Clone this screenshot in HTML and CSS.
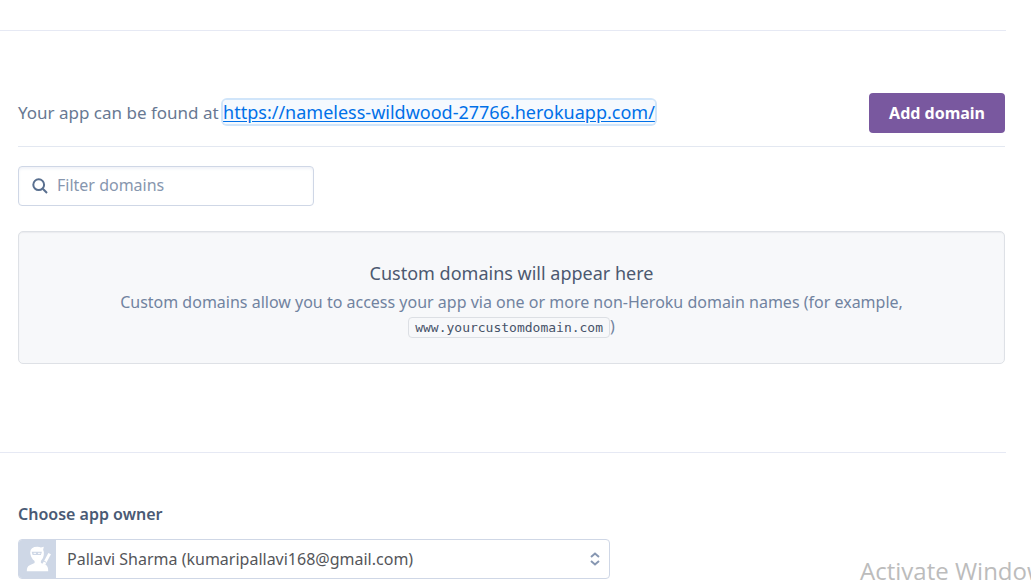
FILE: index.html
```html
<!DOCTYPE html>
<html lang="en">
<head>
<meta charset="utf-8">
<meta name="viewport" content="width=device-width, initial-scale=1">
<title>Domains</title>
<link rel="stylesheet" href="styles.css">
</head>
<body>
<main class="settings">
  <section class="domains">
    <div class="domains-header">
      <p class="app-url">Your app can be found at <a class="app-link" href="https://nameless-wildwood-27766.herokuapp.com/">https://nameless-wildwood-27766.herokuapp.com/</a></p>
      <button class="add-button" type="button">Add domain</button>
    </div>
    <div class="filter">
      <svg class="filter-icon" viewBox="0 0 16 16" aria-hidden="true"><circle cx="6.7" cy="6.7" r="5.4"/><path d="M10.8 10.8 15 15"/></svg>
      <input class="filter-input" type="text" placeholder="Filter domains" aria-label="Filter domains">
    </div>
    <div class="empty">
      <h2 class="empty-title">Custom domains will appear here</h2>
      <p class="empty-text">Custom domains allow you to access your app via one or more non-Heroku domain names (for example, <code class="code">www.yourcustomdomain.com</code>)</p>
    </div>
  </section>
  <section class="owner">
    <label class="owner-label" for="owner">Choose app owner</label>
    <div class="owner-field">
      <span class="avatar">
        <svg class="avatar-icon" viewBox="0 0 38 38" aria-hidden="true">
          <path class="ninja" d="M11.500 12.500Q11.500 6.500 19 6.500Q21 6.500 22.500 7.300L25.500 6.500L24.800 9.500Q25.800 11 25.500 15Q25 19 22.500 21V23L27.500 25Q30 26.500 30 31.500H8Q8 26.500 11 25.300L16 23V21Q12 18 11.500 12.500Z"/>
          <path class="mask" d="M13 11.500H23.500L22.500 15H14Z"/>
          <path class="eyes" d="M15 13.200h2.500M19.500 13.200h2.500"/>
          <path class="sword" d="M25.500 24.500 31.500 13.500"/>
          <path class="guard" d="M24.500 20.500 28 22.500"/>
        </svg>
      </span>
      <select class="owner-select" id="owner">
        <option>Pallavi Sharma (kumaripallavi168@gmail.com)</option>
      </select>
      <svg class="arrows" viewBox="0 0 10 14" aria-hidden="true"><path d="M1 5 5 1.500 9 5M1 9l4 3.500L9 9"/></svg>
    </div>
  </section>
</main>
<div class="watermark">Activate Windows</div>
</body>
</html>
```
FILE: styles.css
```css
* {
  box-sizing: border-box;
}

body {
  margin: 0;
  position: relative;
  min-height: 100vh;
  overflow: hidden;
  background: #fff;
  color: #687892;
  font-family: "Noto Sans", "Open Sans", sans-serif;
}

.settings {
  margin-right: 25px;
  padding-top: 30px;
}

.domains {
  padding: 62px 1px 88px 18px;
  border-top: 1px solid #e6e9f4;
  border-bottom: 1px solid #e6e9f4;
}

.domains-header {
  display: flex;
  align-items: center;
  justify-content: space-between;
  padding-bottom: 13px;
  border-bottom: 1px solid #e3e8f1;
}

.app-url {
  margin: 0;
  padding-bottom: 2px;
  font-size: 17px;
  line-height: 24px;
}

.app-link {
  color: #0070e8;
  font-size: 18px;
  border-radius: 4px;
  background: #f5f9fe;
  box-shadow: 0 0 0 2px #d0e5fa;
  text-underline-offset: 2px;
}

.add-button {
  height: 40px;
  padding: 0 20px;
  border: 0;
  border-radius: 4px;
  background: #79589f;
  color: #fff;
  font: 700 16px "Noto Sans", sans-serif;
}

.filter {
  display: flex;
  align-items: center;
  gap: 9px;
  width: 296px;
  height: 40px;
  margin-top: 19px;
  padding: 0 13px;
  border: 1px solid #cfd7e6;
  border-radius: 4px;
  box-shadow: inset 0 2px 3px #f1f3f8;
}

.filter-icon {
  width: 16px;
  height: 16px;
  fill: none;
  stroke: #596f8f;
  stroke-width: 2;
}

.filter-input {
  flex: 1;
  min-width: 0;
  padding: 0 0 2px;
  border: 0;
  outline: 0;
  background: transparent;
  font: 16px "Noto Sans", sans-serif;
}

.filter-input::placeholder {
  color: #8796ae;
}

.empty {
  margin-top: 25px;
  padding: 29px 80px 25px;
  border: 1px solid #dee1e6;
  border-radius: 5px;
  background: #f7f8fa;
  box-shadow: inset 0 1px 1px #eaecef;
  text-align: center;
}

.empty-title {
  margin: 0 0 4px;
  color: #4c5970;
  font-size: 18px;
  font-weight: 400;
  line-height: 25px;
}

.empty-text {
  margin: 0;
  color: #7183a0;
  font-size: 16px;
  line-height: 24px;
}

.code {
  padding: 2px 6px;
  border: 1px solid #dcdfe4;
  border-radius: 4px;
  color: #465268;
  font: 13px "DejaVu Sans Mono", monospace;
}

.owner {
  padding: 49px 0 0 18px;
}

.owner-label {
  display: block;
  color: #4a5a75;
  font-size: 16px;
  font-weight: 600;
  line-height: 24px;
}

.owner-field {
  display: flex;
  align-items: center;
  max-width: 592px;
  height: 40px;
  margin-top: 13px;
  padding-right: 9px;
  overflow: hidden;
  border: 1px solid #cfd7e6;
  border-radius: 4px;
}

.avatar {
  width: 37px;
  height: 38px;
  background: #ced7e6;
}

.avatar-icon {
  display: block;
  width: 37px;
  height: 38px;
}

.ninja {
  fill: #fff;
}

.mask {
  fill: #ced7e6;
}

.eyes,
.sword,
.guard {
  fill: none;
  stroke: #fff;
  stroke-width: 1;
}

.sword {
  stroke-width: 3;
}

.guard {
  stroke: #ced7e6;
}

.owner-select {
  flex: 1;
  min-width: 0;
  height: 38px;
  padding: 0 11px;
  appearance: none;
  border: 0;
  outline: 0;
  background: transparent;
  color: #55565a;
  font: 16px "Noto Sans", sans-serif;
}

.arrows {
  width: 10px;
  height: 14px;
  fill: none;
  stroke: #8797b2;
  stroke-width: 2;
}

.watermark {
  position: absolute;
  right: -26px;
  bottom: -7px;
  color: #bcbcbc;
  font-family: "Open Sans", sans-serif;
  font-size: 24px;
  line-height: 32px;
  white-space: nowrap;
  pointer-events: none;
}
```
